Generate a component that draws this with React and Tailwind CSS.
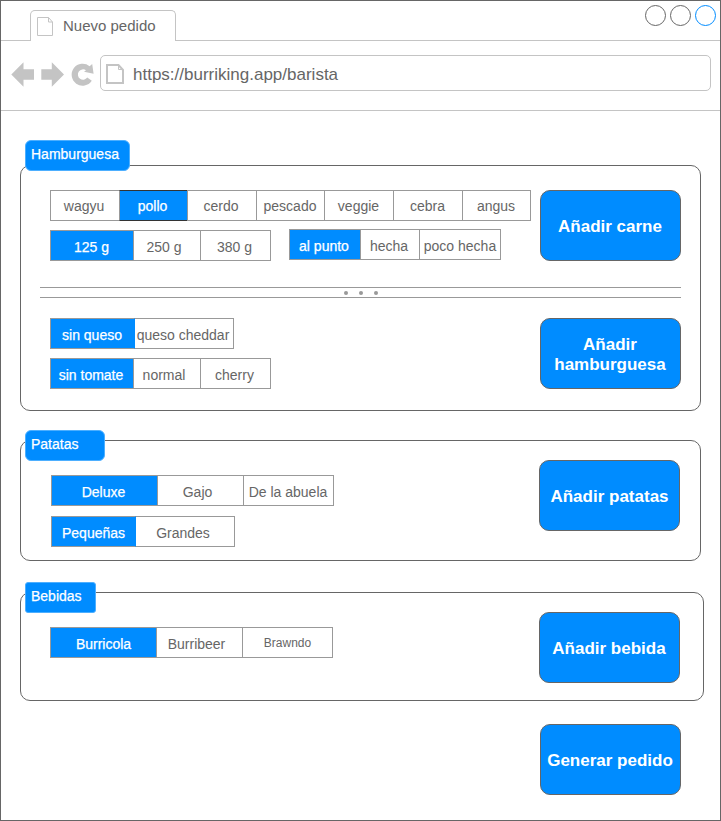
import React from "react";

const GRAY = "border-[#999]";

function Doc({ big }) {
  return big ? (
    <svg width="18" height="20" viewBox="0 0 18 20" className="shrink-0" fill="none" stroke="#c4c4c4">
      <path d="M1 1H12.5L17 6V19H1Z" strokeWidth="2" />
      <path d="M12.5 1V5.5H17" strokeWidth="1" />
    </svg>
  ) : (
    <svg width="17" height="19" viewBox="0 0 17 19" className="shrink-0" fill="none" stroke="#c4c4c4">
      <path d="M.5 .5H11.5L15.5 5V18.5H.5Z" />
      <path d="M11.5 .5V5H15.5" />
    </svg>
  );
}

function Segments({ items, className = "", pad = "pt-1.5" }) {
  return (
    <div className={`flex h-[31px] ${className}`}>
      {items.map((it, i) => (
        <div
          key={it.t}
          className={`border-y border-l text-center leading-5 whitespace-nowrap ${it.s || "text-sm"} ${it.p || pad} ${it.w} ${it.b || GRAY} ${
            it.on ? "bg-[#008cff] text-white [-webkit-text-stroke:0.25px_white]" : "text-[#666]"
          } ${i === items.length - 1 ? "border-r" : ""}`}
        >
          <span className={it.n || "mr-px"}>{it.t}</span>
        </div>
      ))}
    </div>
  );
}

function Action({ children, className = "" }) {
  return (
    <button
      className={`flex h-[71px] w-[141px] shrink-0 items-center justify-center rounded-[10px] border border-[#666] bg-[#008cff] pt-[3px] pr-px text-center text-[17px] leading-5 font-bold text-white ${className}`}
    >
      {children}
    </button>
  );
}

function Group({ title, labelClass, className, children }) {
  return (
    <section className={`relative ml-[19px] rounded-[10px] border border-[#666] ${className}`}>
      <h2
        className={`absolute left-1 h-[31px] border border-[#4dafff] bg-[#008cff] pt-[3px] pl-[5px] text-sm leading-5 text-white [-webkit-text-stroke:0.25px_white] ${labelClass}`}
      >
        {title}
      </h2>
      {children}
    </section>
  );
}

export default function App() {
  return (
    <div className="h-[821px] w-[721px] overflow-hidden border border-[#666] bg-white font-['Liberation_Sans',Arial,sans-serif] text-[#666]">
      <header className="flex h-10">
        <div className="w-[29px] border-b border-[#c4c4c4]" />
        <div className="mt-[9px] flex w-[146px] rounded-t-[5px] border-x border-t border-[#c4c4c4] pt-1.5 pl-1.5">
          <Doc />
          <span className="-mt-px ml-[9px] text-[15px] leading-5 whitespace-nowrap">Nuevo pedido</span>
        </div>
        <div className="flex flex-1 justify-end gap-1 border-b border-[#c4c4c4] pt-1 pr-1">
          <div className="size-[21px] rounded-full border border-[#666]" />
          <div className="size-[21px] rounded-full border border-[#666]" />
          <div className="size-[21px] rounded-full border border-[#008cff]" />
        </div>
      </header>

      <nav className="flex h-[70px] border-b border-[#c4c4c4] pt-3.5 pl-2.5">
        <svg width="89" height="36" viewBox="11 55 89 36" className="shrink-0" fill="#c4c4c4">
          <path d="M11.3 74.5L23.5 62.3V69.2H34V79.8H23.5V86.7Z" />
          <path d="M64 74.5L51.8 62.3V69.2H41.3V79.8H51.8V86.7Z" />
          <path d="M89.6 66.2L92.2 64L93.6 73.8L84 71.8L86 70.2A5.2 5.2 0 1 0 87.3 77.6L91.8 80.8A11 11 0 1 1 89.6 66.2Z" />
        </svg>
        <div className="flex h-9 w-[611px] rounded-[5px] border border-[#c4c4c4] pt-2 pl-[5px]">
          <Doc big />
          <span className="mt-px ml-[9px] text-[17px] leading-5">https://burriking.app/barista</span>
        </div>
      </nav>

      <main>
        <Group title="Hamburguesa" labelClass="-top-[26px] w-[105px] rounded-[6px]" className="mt-[54px] h-[246px] w-[681px]">
          <div className="flex pt-6 pl-[29px]">
            <div className="w-[490px]">
              <Segments
                pad="pt-[5px]"
                items={[
                  { t: "wagyu", w: "w-[69px]", n: "mr-0.5" },
                  { t: "pollo", w: "w-[68px]", n: "mr-0.5", on: true, b: "border-l-[#999] border-y-[#333]" },
                  { t: "cerdo", w: "w-[69px]", n: "mr-0.5" },
                  { t: "pescado", w: "w-[68px]" },
                  { t: "veggie", w: "w-[69px]" },
                  { t: "cebra", w: "w-[69px]" },
                  { t: "angus", w: "w-[69px]" },
                ]}
              />
              <div className="flex gap-[18px] pt-2">
                <Segments
                  className="mt-px"
                  items={[
                    { t: "125 g", w: "w-[83px]", on: true },
                    { t: "250 g", w: "w-[67px]", n: "mr-1.5" },
                    { t: "380 g", w: "w-[71px]", n: "mr-0.5" },
                  ]}
                />
                <Segments
                  items={[
                    { t: "al punto", w: "w-[71px]", n: "mr-0.5", on: true },
                    { t: "hecha", w: "w-[59px]", n: "mr-0.5" },
                    { t: "poco hecha", w: "w-[82px]", n: "mr-0" },
                  ]}
                />
              </div>
            </div>
            <Action>Añadir carne</Action>
          </div>
          <div className="mt-[26px] ml-[19px] flex h-[11px] w-[641px] items-center justify-center gap-[11px] border-y border-[#999]">
            <i className="size-1 rounded-full bg-[#999]" />
            <i className="size-1 rounded-full bg-[#999]" />
            <i className="size-1 rounded-full bg-[#999]" />
          </div>
          <div className="flex pt-5 pl-[29px]">
            <div className="flex w-[490px] flex-col gap-[9px]">
              <Segments
                items={[
                  { t: "sin queso", w: "w-[84px]", on: true },
                  { t: "queso cheddar", w: "w-[100px]", b: "border-l-[#008cff] border-y-[#999] border-r-[#999]", n: "mr-0.5" },
                ]}
              />
              <Segments
                items={[
                  { t: "sin tomate", w: "w-[83px]", n: "mr-0.5", on: true },
                  { t: "normal", w: "w-[67px]", n: "mr-1.5" },
                  { t: "cherry", w: "w-[71px]", n: "mr-0.5" },
                ]}
              />
            </div>
            <Action>
              Añadir
              <br />
              hamburguesa
            </Action>
          </div>
        </Group>

        <Group title="Patatas" labelClass="-top-[11px] w-[80px] rounded-[6px]" className="mt-[29px] h-[121px] w-[681px]">
          <div className="flex pt-[19px] pl-[30px]">
            <div className="flex w-[488px] flex-col gap-2.5 pt-[15px]">
              <Segments
                items={[
                  { t: "Deluxe", w: "w-[106px]", n: "mr-0.5", on: true },
                  { t: "Gajo", w: "w-[86px]", n: "mr-1.5" },
                  { t: "De la abuela", w: "w-[91px]" },
                ]}
              />
              <Segments
                items={[
                  { t: "Pequeñas", w: "w-[84px]", n: "mr-0", on: true },
                  { t: "Grandes", w: "w-[100px]", b: "border-l-[#008cff] border-y-[#999] border-r-[#999]", n: "mr-1" },
                ]}
              />
            </div>
            <Action className="pr-0!">Añadir patatas</Action>
          </div>
        </Group>

        <Group title="Bebidas" labelClass="-top-[11px] w-[71px] rounded-[3px]" className="mt-[31px] h-[109px] w-[684px]">
          <div className="flex pt-[19px] pl-[29px]">
            <div className="w-[489px] pt-[15px]">
              <Segments
                items={[
                  { t: "Burricola", w: "w-[106px]", n: "mr-0", on: true },
                  { t: "Burribeer", w: "w-[86px]", n: "mr-1.5" },
                  { t: "Brawndo", w: "w-[91px]", n: "mr-0", s: "text-xs leading-5!", p: "pt-[5px]" },
                ]}
              />
            </div>
            <Action>Añadir bebida</Action>
          </div>
        </Group>

        <Action className="mt-[23px] ml-[539px]">Generar pedido</Action>
      </main>
    </div>
  );
}
